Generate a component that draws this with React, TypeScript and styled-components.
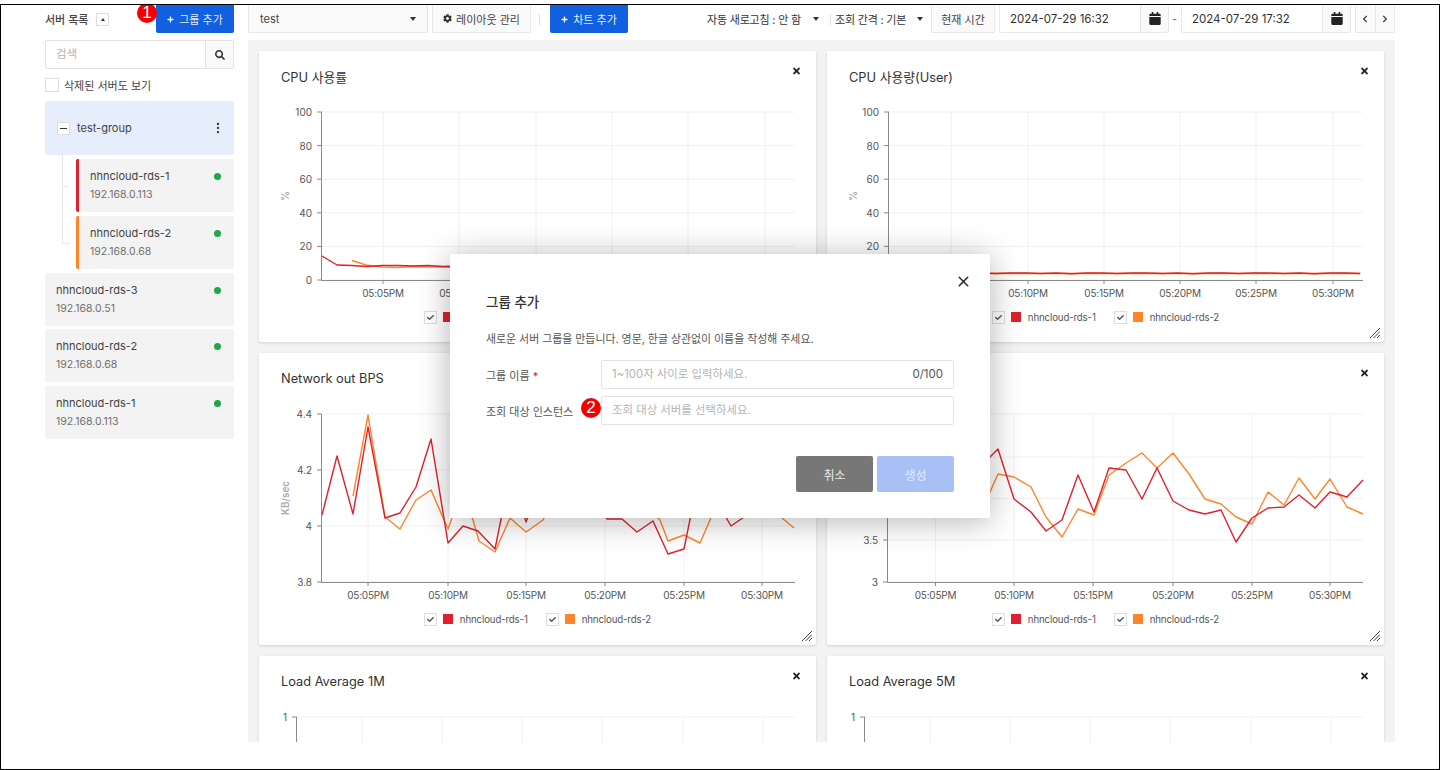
import React from 'react';
import styled, { createGlobalStyle } from 'styled-components';
import { FaCalendar, FaCheck, FaChevronLeft, FaChevronRight, FaCog, FaPlus, FaSearch, FaTimes } from 'react-icons/fa';
import { EllipsisVertical, X } from 'lucide-react';

const RED = '#e0202c';
const ORANGE = '#ff8528';
const BLUE = '#1160e0';

const GlobalStyle = createGlobalStyle`
  html, body {
    margin: 0;
    padding: 0;
    background: #fff;
    overflow: hidden;
  }
  * {
    box-sizing: border-box;
  }
  body {
    font-family: Inter, "Noto Sans CJK KR", "Noto Sans", sans-serif;
    color: #333;
  }
`;

type Series = { color: string; points: number[][] };

type ChartConfig = {
  title: string;
  originX: number;
  originY: number;
  axisX: number;
  rightX: number;
  topY: number;
  bottomY: number;
  xTicks: number[];
  yTicks: { label: string; y: number }[];
  yTitle?: string;
  series: Series[];
};

const TIME_LABELS = ['05:05PM', '05:10PM', '05:15PM', '05:20PM', '05:25PM', '05:30PM'];

const percentTicks = [
  { label: '100', y: 112 },
  { label: '80', y: 145.6 },
  { label: '60', y: 179.2 },
  { label: '40', y: 212.8 },
  { label: '20', y: 246.4 },
  { label: '0', y: 280 },
];

const flatLine = (from: number, to: number, y: number, jitter: number[]) => {
  const points: number[][] = [];
  let i = 0;
  for (let x = from; x <= to; x += 15.2) {
    points.push([x, y + jitter[i % jitter.length]]);
    i += 1;
  }
  return points;
};

const charts: ChartConfig[] = [
  {
    title: 'CPU 사용률',
    originX: 259,
    originY: 51,
    axisX: 322,
    rightX: 795,
    topY: 112,
    bottomY: 280,
    xTicks: [383, 459, 536, 612, 688, 765],
    yTicks: percentTicks,
    yTitle: '%',
    series: [
      { color: ORANGE, points: [[352, 260.5], [366, 265], ...flatLine(382, 795, 267, [0, 0.5, -0.5, 0])] },
      { color: RED, points: [[322, 256], [337, 265], [352, 265.5], [367, 266.5], [382, 265.5], [398, 265.5], [413, 266], [428, 265.5], [443, 266.5], ...flatLine(458, 795, 266, [0, 0.5, 0, -0.5])] },
    ],
  },
  {
    title: 'CPU 사용량(User)',
    originX: 827,
    originY: 51,
    axisX: 889,
    rightX: 1363,
    topY: 112,
    bottomY: 280,
    xTicks: [951, 1028, 1104, 1180, 1256, 1333],
    yTicks: percentTicks,
    yTitle: '%',
    series: [
      { color: ORANGE, points: flatLine(889, 1363, 273.5, [0]) },
      { color: RED, points: flatLine(889, 1363, 273, [0, 0, 0.5, 0, 0.8, 0, 0, 0.5]) },
    ],
  },
  {
    title: 'Network out BPS',
    originX: 259,
    originY: 353,
    axisX: 322,
    rightX: 795,
    topY: 414,
    bottomY: 582,
    xTicks: [368, 448, 526, 605, 684, 762],
    yTicks: [
      { label: '4.4', y: 414 },
      { label: '4.2', y: 470 },
      { label: '4', y: 526 },
      { label: '3.8', y: 582 },
    ],
    yTitle: 'KB/sec',
    series: [
      {
        color: ORANGE,
        points: [[353, 496], [368, 415], [385, 517], [400, 529], [416, 500], [431, 490], [448, 529], [452, 518], [463, 495], [473, 520], [479, 541], [495, 552], [510, 518], [526, 532], [543, 520], [558, 490], [575, 500], [590, 470], [607, 480], [622, 490], [637, 500], [660, 520], [668, 541], [684, 535], [700, 543], [710, 520], [731, 470], [745, 490], [762, 480], [782, 518], [794, 528]],
      },
      {
        color: RED,
        points: [[322, 515], [337, 456], [353, 514], [368, 427], [385, 518], [400, 513], [416, 487], [431, 439], [448, 543], [463, 526], [478, 531], [495, 549], [511, 470], [526, 522], [543, 480], [558, 480], [575, 470], [590, 490], [607, 519], [622, 519], [637, 532], [653, 521], [668, 554], [684, 549], [700, 470], [716, 500], [731, 526], [747, 515], [762, 505], [778, 510], [794, 500]],
      },
    ],
  },
  {
    title: 'Network in BPS',
    originX: 827,
    originY: 353,
    axisX: 888,
    rightX: 1363,
    topY: 414,
    bottomY: 582,
    xTicks: [935.5, 1014, 1093, 1173, 1252, 1330],
    yTicks: [
      { label: '5', y: 414 },
      { label: '4.5', y: 457 },
      { label: '4', y: 498.5 },
      { label: '3.5', y: 540 },
      { label: '3', y: 582 },
    ],
    yTitle: 'KB/sec',
    series: [
      {
        color: ORANGE,
        points: [[950, 510], [975, 495], [990, 492], [998, 474], [1014, 477], [1031, 487], [1046, 517], [1062, 537], [1078, 509], [1094, 515], [1109, 475], [1126, 463], [1142, 453], [1157, 468], [1173, 453], [1189, 474], [1205, 499], [1221, 504], [1236, 517], [1252, 524], [1268, 492], [1284, 505], [1299, 478], [1315, 499], [1330, 479], [1347, 507], [1363, 514]],
      },
      {
        color: RED,
        points: [[950, 500], [975, 470], [990, 457], [998, 449], [1014, 499], [1031, 512], [1046, 531], [1062, 520], [1078, 475], [1094, 512], [1109, 468], [1126, 470], [1142, 499], [1157, 468], [1173, 501], [1189, 510], [1205, 514], [1221, 510], [1236, 542], [1252, 518], [1268, 508], [1284, 507], [1299, 495], [1315, 508], [1330, 492], [1347, 497], [1363, 480]],
      },
    ],
  },
  {
    title: 'Load Average 1M',
    originX: 259,
    originY: 656,
    axisX: 297,
    rightX: 795,
    topY: 717,
    bottomY: 885,
    xTicks: [362, 442, 522, 602, 683, 763],
    yTicks: [
      { label: '1', y: 717 },
      { label: '0', y: 885 },
    ],
    series: [],
  },
  {
    title: 'Load Average 5M',
    originX: 827,
    originY: 656,
    axisX: 865,
    rightX: 1363,
    topY: 717,
    bottomY: 885,
    xTicks: [930, 1010, 1090, 1170, 1251, 1331],
    yTicks: [
      { label: '1', y: 717 },
      { label: '0', y: 885 },
    ],
    series: [],
  },
];

const LineChart = ({ config }: { config: ChartConfig }) => {
  const { originX, originY, axisX, rightX, topY, bottomY, xTicks, yTicks, yTitle, series } = config;
  const midY = (topY + bottomY) / 2;
  return (
    <ChartSvg viewBox={`${originX} ${originY + 50} 557 205`}>
      {yTicks.map((tick) => (
        <line key={tick.label} x1={axisX} x2={rightX} y1={tick.y} y2={tick.y} stroke="#f0f0f0" />
      ))}
      {xTicks.map((x) => (
        <line key={x} x1={x} x2={x} y1={topY} y2={bottomY} stroke="#f0f0f0" />
      ))}
      {series.map((s) => (
        <polyline
          key={s.color}
          points={s.points.map((p) => p.join(',')).join(' ')}
          fill="none"
          stroke={s.color}
          strokeWidth={1.4}
          strokeLinejoin="round"
        />
      ))}
      <path d={`M${axisX - 0.5} ${topY}V${bottomY + 0.5}H${rightX}`} fill="none" stroke="#8a8a8a" />
      {yTicks.map((tick) => (
        <g key={tick.label}>
          <line x1={axisX - 5} x2={axisX} y1={tick.y} y2={tick.y} stroke="#8a8a8a" />
          <AxisText x={axisX - 10} y={tick.y + 4} textAnchor="end">
            {tick.label}
          </AxisText>
        </g>
      ))}
      {xTicks.map((x, i) => (
        <g key={x}>
          <line x1={x} x2={x} y1={bottomY} y2={bottomY + 4} stroke="#8a8a8a" />
          <TimeText x={x} y={bottomY + 17} textAnchor="middle">
            {TIME_LABELS[i]}
          </TimeText>
        </g>
      ))}
      {yTitle && (
        <AxisTitle x={originX + 30} y={midY} textAnchor="middle" transform={`rotate(-90 ${originX + 30} ${midY})`}>
          {yTitle}
        </AxisTitle>
      )}
    </ChartSvg>
  );
};

const ResizeIcon = () => (
  <ResizeSvg viewBox="0 0 10 10">
    <path d="M0 10L10 0M3.5 10L10 3.5M7 10L10 7" stroke="#444" strokeWidth={1} fill="none" />
  </ResizeSvg>
);

const ChartCard = ({ config }: { config: ChartConfig }) => (
  <Card>
    <CardHeader>
      <CardTitle>{config.title}</CardTitle>
      <CardClose>
        <FaTimes />
      </CardClose>
    </CardHeader>
    <LineChart config={config} />
    <Legend>
      <LegendItem>
        <CheckBox>
          <FaCheck />
        </CheckBox>
        <LegendSwatch $color={RED} />
        <span>nhncloud-rds-1</span>
      </LegendItem>
      <LegendItem>
        <CheckBox>
          <FaCheck />
        </CheckBox>
        <LegendSwatch $color={ORANGE} />
        <span>nhncloud-rds-2</span>
      </LegendItem>
    </Legend>
    <ResizeIcon />
  </Card>
);

const ServerRow = ({ name, ip, bar }: { name: string; ip: string; bar?: string }) => (
  <ServerItem $bar={bar}>
    <ServerText>
      <ServerName>{name}</ServerName>
      <ServerIp>{ip}</ServerIp>
    </ServerText>
    <StatusDot />
  </ServerItem>
);

const App = () => {
  return (
    <>
      <GlobalStyle />
      <Frame>
        <Sidebar>
          <SideHeader>
            <SideTitle>서버 목록</SideTitle>
            <CollapseToggle />
            <AddGroupWrap>
              <Badge $left={-19} $top={-2}>1</Badge>
              <PrimaryButton $width={78}>
                <FaPlus />
                그룹 추가
              </PrimaryButton>
            </AddGroupWrap>
          </SideHeader>
          <SearchRow>
            <SearchInput>검색</SearchInput>
            <SearchButton>
              <FaSearch />
            </SearchButton>
          </SearchRow>
          <DeletedRow>
            <EmptyBox />
            삭제된 서버도 보기
          </DeletedRow>
          <GroupRow>
            <MinusBox />
            <GroupName>test-group</GroupName>
            <GroupMenu>
              <EllipsisVertical size={14} strokeWidth={2} />
            </GroupMenu>
          </GroupRow>
          <NestedList>
            <ServerRow name="nhncloud-rds-1" ip="192.168.0.113" bar={RED} />
            <ServerRow name="nhncloud-rds-2" ip="192.168.0.68" bar={ORANGE} />
          </NestedList>
          <ServerList>
            <ServerRow name="nhncloud-rds-3" ip="192.168.0.51" />
            <ServerRow name="nhncloud-rds-2" ip="192.168.0.68" />
            <ServerRow name="nhncloud-rds-1" ip="192.168.0.113" />
          </ServerList>
        </Sidebar>
        <Content>
          <Toolbar>
            <SelectBox>
              test
              <Caret />
            </SelectBox>
            <GhostButton $width={99}>
              <FaCog />
              레이아웃 관리
            </GhostButton>
            <ToolDivider />
            <PrimaryButton $width={78}>
              <FaPlus />
              차트 추가
            </PrimaryButton>
            <ToolRight>
              <DropText $width={113} $inset={1}>
                자동 새로고침 : 안 함
                <Caret />
              </DropText>
              <TextDivider />
              <DropText $width={92} $inset={4}>
                조회 간격 : 기본
                <Caret />
              </DropText>
              <GhostButton $width={64}>현재 시간</GhostButton>
              <DateField>
                <DateValue>2024-07-29 16:32</DateValue>
                <DateIcon>
                  <FaCalendar />
                </DateIcon>
              </DateField>
              <DateDash>-</DateDash>
              <DateField>
                <DateValue>2024-07-29 17:32</DateValue>
                <DateIcon>
                  <FaCalendar />
                </DateIcon>
              </DateField>
              <PagerGroup>
                <PagerButton>
                  <FaChevronLeft />
                </PagerButton>
                <PagerButton>
                  <FaChevronRight />
                </PagerButton>
              </PagerGroup>
            </ToolRight>
          </Toolbar>
          <Board>
            {charts.map((chart) => (
              <ChartCard key={chart.title} config={chart} />
            ))}
          </Board>
        </Content>
        <Modal>
          <ModalClose>
            <X size={17} strokeWidth={2} />
          </ModalClose>
          <ModalTitle>그룹 추가</ModalTitle>
          <ModalDesc>새로운 서버 그룹을 만듭니다. 영문, 한글 상관없이 이름을 작성해 주세요.</ModalDesc>
          <FormRow>
            <FormLabel>
              그룹 이름 <Required>*</Required>
            </FormLabel>
            <FormInput>
              1~100자 사이로 입력하세요.
              <Counter>0/100</Counter>
            </FormInput>
          </FormRow>
          <FormRow>
            <FormLabel>조회 대상 인스턴스</FormLabel>
            <Badge $left={95} $top={2}>2</Badge>
            <FormInput>조회 대상 서버를 선택하세요.</FormInput>
          </FormRow>
          <ModalActions>
            <CancelButton>취소</CancelButton>
            <CreateButton>생성</CreateButton>
          </ModalActions>
        </Modal>
      </Frame>
    </>
  );
};

const Frame = styled.div`
  position: relative;
  margin-top: 4px;
  width: 1440px;
  height: 766px;
  border: 1px solid #000;
  display: flex;
  overflow: hidden;
`;
const Sidebar = styled.aside`
  width: 189px;
  margin-left: 44px;
  margin-right: 14px;
  flex-shrink: 0;
`;
const SideHeader = styled.div`
  height: 28px;
  display: flex;
  align-items: center;
`;
const SideTitle = styled.span`
  font-size: 11px;
  font-weight: 500;
  color: #444;
`;
const CollapseToggle = styled.span`
  width: 13px;
  height: 13px;
  margin-left: 8px;
  border: 1px solid #ddd;
  display: flex;
  align-items: center;
  justify-content: center;
  &::after {
    content: '';
    border-left: 2.5px solid transparent;
    border-right: 2.5px solid transparent;
    border-bottom: 3px solid #333;
  }
`;
const AddGroupWrap = styled.div`
  position: relative;
  margin-left: auto;
`;
const Badge = styled.span<{ $left: number; $top: number }>`
  position: absolute;
  z-index: 2;
  left: ${({ $left }) => $left}px;
  top: ${({ $top }) => $top}px;
  width: 20px;
  height: 20px;
  border-radius: 50%;
  background: #f50000;
  color: #fff;
  font-family: "Liberation Sans", sans-serif;
  font-size: 17px;
  line-height: 20px;
  text-align: center;
`;
const PrimaryButton = styled.button<{ $width: number }>`
  width: ${({ $width }) => $width}px;
  height: 28px;
  padding: 0;
  border: 0;
  border-radius: 0 0 2px 2px;
  background: ${BLUE};
  color: #e4ecfb;
  font-family: inherit;
  font-size: 11px;
  display: flex;
  align-items: center;
  justify-content: center;
  gap: 5px;
  svg {
    width: 7px;
    height: 7px;
    color: #fff;
  }
`;
const SearchRow = styled.div`
  display: flex;
  height: 29px;
  margin-top: 7px;
  border: 1px solid #e3e3e3;
  border-radius: 2px;
`;
const SearchInput = styled.div`
  flex: 1;
  padding-left: 10px;
  font-size: 11.5px;
  line-height: 27px;
  color: #b5b5b5;
`;
const SearchButton = styled.div`
  width: 28px;
  background: #fafafa;
  border-left: 1px solid #e3e3e3;
  display: flex;
  align-items: center;
  justify-content: center;
  svg {
    width: 10px;
    height: 10px;
    color: #333;
  }
`;
const DeletedRow = styled.div`
  display: flex;
  align-items: center;
  gap: 5px;
  height: 14px;
  margin-top: 9px;
  font-size: 11px;
  color: #444;
`;
const EmptyBox = styled.span`
  width: 14px;
  height: 14px;
  border: 1px solid #ddd;
`;
const GroupRow = styled.div`
  height: 54px;
  margin-top: 9px;
  padding: 0 12px;
  border-radius: 2px;
  background: #e6eefb;
  display: flex;
  align-items: center;
`;
const MinusBox = styled.span`
  width: 13px;
  height: 13px;
  background: #fff;
  border: 1px solid #ddd;
  display: flex;
  align-items: center;
  justify-content: center;
  &::after {
    content: '';
    width: 7px;
    height: 1px;
    background: #333;
  }
`;
const GroupName = styled.span`
  margin-left: 7px;
  font-size: 11px;
  color: #444;
`;
const GroupMenu = styled.span`
  margin-left: auto;
  margin-right: -3px;
  display: flex;
  color: #333;
`;
const NestedList = styled.div`
  position: relative;
  margin-top: 4px;
  padding-left: 31px;
  display: flex;
  flex-direction: column;
  gap: 3.75px;
  &::before {
    content: '';
    position: absolute;
    left: 17px;
    top: -4px;
    width: 7px;
    height: 88px;
    border-left: 1px solid #e6e6e6;
    border-bottom: 1px solid #e6e6e6;
  }
  &::after {
    content: '';
    position: absolute;
    left: 17px;
    top: 27px;
    width: 7px;
    height: 1px;
    background: #e6e6e6;
  }
`;
const ServerList = styled.div`
  margin-top: 3.75px;
  display: flex;
  flex-direction: column;
  gap: 3.75px;
`;
const ServerItem = styled.div<{ $bar?: string }>`
  height: 53px;
  padding: 9px 13px 0 11px;
  border-radius: 2px;
  background: #f3f3f3;
  border-left: ${({ $bar }) => ($bar ? `3px solid ${$bar}` : '0')};
  display: flex;
  justify-content: space-between;
`;
const ServerText = styled.div`
  display: flex;
  flex-direction: column;
  gap: 4px;
`;
const ServerName = styled.span`
  font-size: 11px;
  line-height: 16px;
  color: #444;
`;
const ServerIp = styled.span`
  font-size: 10.5px;
  line-height: 14px;
  color: #707070;
`;
const StatusDot = styled.span`
  width: 7px;
  height: 7px;
  margin-top: 5px;
  border-radius: 50%;
  background: #22a64a;
`;
const Content = styled.main`
  width: 1147px;
  flex-shrink: 0;
`;
const Toolbar = styled.div`
  height: 35px;
  display: flex;
  align-items: flex-start;
  gap: 4px;
`;
const SelectBox = styled.div`
  width: 180px;
  height: 28px;
  padding: 0 11px;
  background: #fafafa;
  border: 1px solid #e8e8e8;
  border-top: 0;
  border-radius: 0 0 2px 2px;
  font-size: 11px;
  color: #444;
  display: flex;
  align-items: center;
  justify-content: space-between;
`;
const Caret = styled.span`
  border-left: 3.5px solid transparent;
  border-right: 3.5px solid transparent;
  border-top: 4px solid #333;
`;
const GhostButton = styled.button<{ $width: number }>`
  width: ${({ $width }) => $width}px;
  height: 28px;
  padding: 0;
  background: #fafafa;
  border: 1px solid #e8e8e8;
  border-top: 0;
  border-radius: 0 0 2px 2px;
  color: #444;
  font-family: inherit;
  font-size: 11px;
  display: flex;
  align-items: center;
  justify-content: center;
  gap: 4px;
  flex-shrink: 0;
  svg {
    width: 9px;
    height: 9px;
    color: #333;
  }
`;
const ToolDivider = styled.span`
  width: 1px;
  height: 11px;
  margin: 9px 6px 0 4px;
  background: #ddd;
`;
const ToolRight = styled.div`
  margin-left: auto;
  display: flex;
  align-items: flex-start;
  gap: 4px;
`;
const DropText = styled.div<{ $width: number; $inset: number }>`
  width: ${({ $width }) => $width}px;
  height: 28px;
  padding-right: ${({ $inset }) => $inset}px;
  font-size: 11px;
  letter-spacing: -0.2px;
  color: #333;
  display: flex;
  align-items: center;
  justify-content: space-between;
  flex-shrink: 0;
`;
const TextDivider = styled.span`
  width: 1px;
  height: 11px;
  margin: 9px 0 0 6px;
  background: #ddd;
`;
const DateField = styled.div`
  width: 170px;
  height: 28px;
  background: #fff;
  border: 1px solid #e8e8e8;
  border-top: 0;
  border-radius: 0 0 2px 2px;
  display: flex;
`;
const DateValue = styled.span`
  flex: 1;
  padding-left: 10px;
  font-size: 11.5px;
  line-height: 29px;
  color: #333;
`;
const DateIcon = styled.span`
  width: 28px;
  background: #fafafa;
  border-left: 1px solid #e8e8e8;
  display: flex;
  align-items: center;
  justify-content: center;
  svg {
    width: 12px;
    height: 13px;
    color: #222;
  }
`;
const DateDash = styled.span`
  width: 5px;
  margin: 0 0 0 -1px;
  font-size: 11px;
  line-height: 28px;
  color: #666;
`;
const PagerGroup = styled.div`
  display: flex;
  height: 28px;
  width: 40px;
  background: #fafafa;
  border: 1px solid #e8e8e8;
  border-top: 0;
  border-radius: 0 0 2px 2px;
`;
const PagerButton = styled.span`
  flex: 1;
  display: flex;
  align-items: center;
  justify-content: center;
  & + & {
    border-left: 1px solid #e8e8e8;
  }
  svg {
    width: 8px;
    height: 8px;
    color: #333;
  }
`;
const Board = styled.div`
  height: 702px;
  padding: 11px;
  background: #f3f3f3;
  overflow: hidden;
  display: grid;
  grid-template-columns: 557px 557px;
  grid-template-rows: 291px 292px 292px;
  gap: 11px;
`;
const Card = styled.section`
  position: relative;
  background: #fff;
  border-radius: 2px;
  box-shadow: 0 1px 3px rgba(0, 0, 0, 0.14);
`;
const CardHeader = styled.div`
  height: 50px;
  padding: 0 15px 0 22px;
  display: flex;
  align-items: center;
  justify-content: space-between;
`;
const CardTitle = styled.h3`
  margin: 0;
  font-size: 12.8px;
  font-weight: 400;
  color: #333;
`;
const CardClose = styled.span`
  display: flex;
  margin-bottom: 10px;
  svg {
    width: 9px;
    height: 10px;
    color: #222;
  }
`;
const ChartSvg = styled.svg`
  display: block;
  width: 557px;
  height: 205px;
  overflow: hidden;
`;
const AxisText = styled.text`
  font-family: Inter, sans-serif;
  font-size: 10px;
  fill: #555;
`;
const TimeText = styled(AxisText)`
  letter-spacing: -0.2px;
`;
const AxisTitle = styled.text`
  font-family: Inter, sans-serif;
  font-size: 9.8px;
  font-weight: 600;
  fill: #aaa;
`;
const Legend = styled.div`
  height: 22px;
  display: flex;
  align-items: center;
  justify-content: center;
  gap: 18px;
`;
const LegendItem = styled.div`
  display: flex;
  align-items: center;
  font-size: 9.7px;
  letter-spacing: -0.15px;
  color: #555;
`;
const CheckBox = styled.span`
  width: 13px;
  height: 13px;
  margin-right: 6px;
  border: 1px solid #ddd;
  display: flex;
  align-items: center;
  justify-content: center;
  svg {
    width: 7px;
    height: 7px;
    color: #555;
  }
`;
const LegendSwatch = styled.span<{ $color: string }>`
  width: 10px;
  height: 10px;
  margin-right: 7px;
  background: ${({ $color }) => $color};
`;
const ResizeSvg = styled.svg`
  position: absolute;
  right: 4px;
  bottom: 4px;
  width: 10px;
  height: 10px;
`;
const Modal = styled.div`
  position: absolute;
  left: 449px;
  top: 249px;
  width: 540px;
  height: 264px;
  padding: 39px 36px 0;
  background: #fff;
  box-shadow: 0 3px 30px rgba(0, 0, 0, 0.3);
`;
const ModalClose = styled.span`
  position: absolute;
  right: 18px;
  top: 19px;
  display: flex;
  color: #222;
`;
const ModalTitle = styled.h2`
  margin: 0;
  font-size: 13.5px;
  line-height: 18px;
  font-weight: 500;
  color: #333;
`;
const ModalDesc = styled.p`
  margin: 20px 0 13px;
  font-size: 10.9px;
  line-height: 16px;
  color: #555;
`;
const FormRow = styled.div`
  position: relative;
  display: flex;
  align-items: center;
  height: 29px;
  margin-bottom: 7px;
`;
const FormLabel = styled.span`
  width: 115px;
  font-size: 11px;
  color: #555;
  flex-shrink: 0;
`;
const Required = styled.span`
  color: #e0202c;
`;
const FormInput = styled.div`
  flex: 1;
  height: 29px;
  padding: 0 10px;
  border: 1px solid #e3e3e3;
  border-radius: 2px;
  font-size: 11.4px;
  line-height: 27px;
  color: #b5b5b5;
  display: flex;
  justify-content: space-between;
`;
const Counter = styled.span`
  font-size: 11.5px;
  color: #555;
`;
const ModalActions = styled.div`
  margin-top: 31px;
  display: flex;
  justify-content: flex-end;
  gap: 4px;
`;
const CancelButton = styled.button`
  width: 77px;
  height: 36px;
  padding: 0;
  border: 0;
  border-radius: 2px;
  background: #777;
  color: #e8e8e8;
  font-family: inherit;
  font-size: 12px;
`;
const CreateButton = styled(CancelButton)`
  background: #a8c0f5;
  color: #e3ebfc;
`;

export default App;
